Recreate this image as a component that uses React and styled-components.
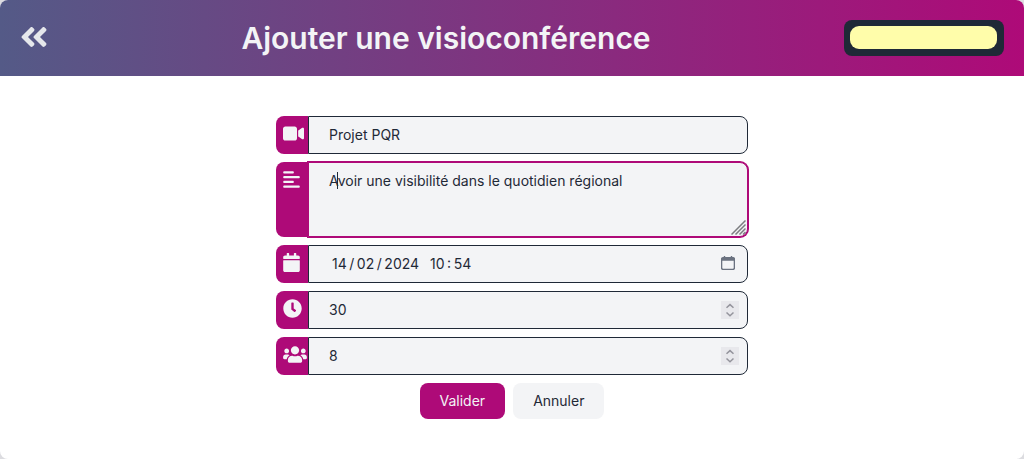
import { useState } from "react";
import styled, { createGlobalStyle } from "styled-components";
import {
  FaAngleDoubleLeft,
  FaCalendar,
  FaClock,
  FaUsers,
} from "react-icons/fa";
import { FaAlignLeft, FaVideo } from "react-icons/fa6";

export default function App() {
  const [title, setTitle] = useState("Projet PQR");
  const [description, setDescription] = useState(
    "Avoir une visibilité dans le quotidien régional"
  );
  const [date, setDate] = useState(
    "14\u2009/\u200902\u2009/\u20092024\u2002 10\u2009:\u200954"
  );
  const [duration, setDuration] = useState(30);
  const [size, setSize] = useState(8);

  return (
    <>
      <GlobalStyle />
      <Page>
        <Header>
          <BackLink href="#" aria-label="Retour">
            <FaAngleDoubleLeft />
          </BackLink>
          <Title>Ajouter une visioconférence</Title>
          <UserButton type="button" aria-label="Utilisateur">
            <UserMask />
          </UserButton>
        </Header>
        <Form onSubmit={(e) => e.preventDefault()}>
          <Row>
            <IconLabel htmlFor="title" aria-label="Titre" $iconWidth={21}>
              <FaVideo />
            </IconLabel>
            <Field>
              <Input
                id="title"
                type="text"
                value={title}
                onChange={(e) => setTitle(e.target.value)}
              />
            </Field>
          </Row>
          <Row>
            <IconLabel
              htmlFor="description"
              aria-label="Description"
              $iconWidth={17}
            >
              <FaAlignLeft />
            </IconLabel>
            <Field>
              <TextArea
                id="description"
                value={description}
                onChange={(e) => setDescription(e.target.value)}
              />
              <Caret />
              <Grip viewBox="0 0 15 15" aria-hidden="true">
                <path d="M0.5 14.5L14.5 0.5M4.5 14.5L14.5 4.5M8.5 14.5L14.5 8.5M12 14.5L14.5 12" />
              </Grip>
            </Field>
          </Row>
          <Row>
            <IconLabel htmlFor="date" aria-label="Date" $iconWidth={17}>
              <FaCalendar />
            </IconLabel>
            <Field>
              <DateInput
                id="date"
                type="text"
                value={date}
                onChange={(e) => setDate(e.target.value)}
              />
              <PickerButton type="button" aria-label="Choisir une date">
                <CalendarIcon />
              </PickerButton>
            </Field>
          </Row>
          <Row>
            <IconLabel htmlFor="duration" aria-label="Durée" $iconWidth={19}>
              <FaClock />
            </IconLabel>
            <Field>
              <Input
                id="duration"
                type="number"
                value={duration}
                onChange={(e) => setDuration(e.target.value)}
              />
              <Spinner />
            </Field>
          </Row>
          <Row>
            <IconLabel htmlFor="size" aria-label="Participants" $iconWidth={24}>
              <FaUsers />
            </IconLabel>
            <Field>
              <Input
                id="size"
                type="number"
                value={size}
                onChange={(e) => setSize(e.target.value)}
              />
              <Spinner />
            </Field>
          </Row>
          <Actions>
            <Button type="submit" $primary>
              Valider
            </Button>
            <Button type="button">Annuler</Button>
          </Actions>
        </Form>
      </Page>
    </>
  );
}

const CalendarIcon = () => (
  <svg width="14" height="14" viewBox="0 0 14 14" fill="none">
    <rect x="0.6" y="1.6" width="12.8" height="11.8" rx="1.6" stroke="#6b7280" strokeWidth="1.4" />
    <path d="M0.5 3a1.5 1.5 0 0 1 1.5-1.5h10a1.5 1.5 0 0 1 1.5 1.5v1.8h-13z" fill="#6b7280" />
    <path d="M3.5 0v2M10.5 0v2" stroke="#6b7280" strokeWidth="1.4" />
  </svg>
);

const Spinner = () => (
  <SpinnerBox viewBox="0 0 18 18" aria-hidden="true">
    <path d="M5.5 6.8L9 3.6L12.5 6.8M5.5 11.5L9 14.7L12.5 11.5" />
  </SpinnerBox>
);

const GlobalStyle = createGlobalStyle`
  * {
    box-sizing: border-box;
  }
  body {
    margin: 0;
    background-color: #dcdce0;
    font-family: Inter, "Liberation Sans", sans-serif;
    font-size: 14px;
    line-height: 20px;
    color: #1f2937;
  }
  button, input, textarea {
    font: inherit;
    color: inherit;
  }
`;

const Page = styled.main`
  min-height: 100vh;
  background-color: #fff;
  border-radius: 8px;
  overflow: hidden;
`;

const Header = styled.header`
  display: flex;
  align-items: center;
  justify-content: space-between;
  padding: 20px;
  background: linear-gradient(to right, #545a87, #ae0a78);
`;

const BackLink = styled.a`
  display: flex;
  padding-bottom: 2px;
  color: #e5e7eb;
  svg {
    width: 28px;
    height: 32px;
  }
`;

const Title = styled.h1`
  margin: 0;
  color: #f3f4f6;
  font-size: 30px;
  font-weight: 600;
  line-height: 36px;
`;

const UserButton = styled.button`
  display: flex;
  width: 160px;
  height: 36px;
  padding: 6px 7px 6px 6px;
  border: none;
  border-radius: 8px;
  background-color: #1f2937;
`;

const UserMask = styled.span`
  flex: 1;
  height: 23px;
  border-radius: 9px;
  background-color: #fffdaa;
`;

const Form = styled.form`
  display: flex;
  flex-direction: column;
  gap: 8px;
  max-width: 472px;
  margin: 0 auto;
  padding: 40px 0;
`;

const Row = styled.div`
  display: flex;
`;

const IconLabel = styled.label`
  width: 32px;
  padding: 8px 0 0 7px;
  border-radius: 8px 0 0 8px;
  background-color: #ae0a78;
  color: #f3f4f6;
  svg {
    display: block;
    width: ${({ $iconWidth }) => $iconWidth}px;
    height: 19px;
  }
`;

const Field = styled.div`
  position: relative;
  display: flex;
  flex: 1;
`;

const Input = styled.input`
  width: 100%;
  height: 38px;
  padding: 0 20px 2px;
  border: 1px solid #1f2937;
  border-radius: 0 8px 8px 0;
  background-color: #f3f4f6;
  outline: none;
  appearance: textfield;
  &::-webkit-inner-spin-button {
    display: none;
  }
`;

const DateInput = styled(Input)`
  padding-left: 23px;
`;

const TextArea = styled.textarea`
  width: 100%;
  height: 75px;
  padding: 8px 20px;
  border: 1px solid #ae0a78;
  border-radius: 0 8px 8px 0;
  box-shadow: 0 0 0 1px #ae0a78;
  background-color: #f3f4f6;
  outline: none;
  resize: none;
`;

// text cursor of the focused field
const Caret = styled.span`
  position: absolute;
  top: 10px;
  left: 29px;
  width: 1px;
  height: 17px;
  background-color: #1f2937;
`;

const Grip = styled.svg`
  position: absolute;
  right: 2px;
  bottom: 2px;
  width: 15px;
  height: 15px;
  fill: none;
  stroke: #7c7d80;
  stroke-width: 1.5;
`;

const PickerButton = styled.button`
  position: absolute;
  top: 11px;
  right: 13px;
  display: flex;
  padding: 0;
  border: none;
  background: none;
`;

const SpinnerBox = styled.svg`
  position: absolute;
  top: 10px;
  right: 9px;
  width: 18px;
  height: 18px;
  background-color: #e8e8ec;
  fill: none;
  stroke: #94949c;
  stroke-width: 1.5;
`;

const Actions = styled.div`
  display: flex;
  justify-content: center;
  gap: 8px;
`;

const Button = styled.button`
  height: 36px;
  padding: 0 20px;
  border: none;
  border-radius: 8px;
  background-color: ${({ $primary }) => ($primary ? "#ae0a78" : "#f3f4f6")};
  color: ${({ $primary }) => ($primary ? "#f3f4f6" : "#1f2937")};
`;
